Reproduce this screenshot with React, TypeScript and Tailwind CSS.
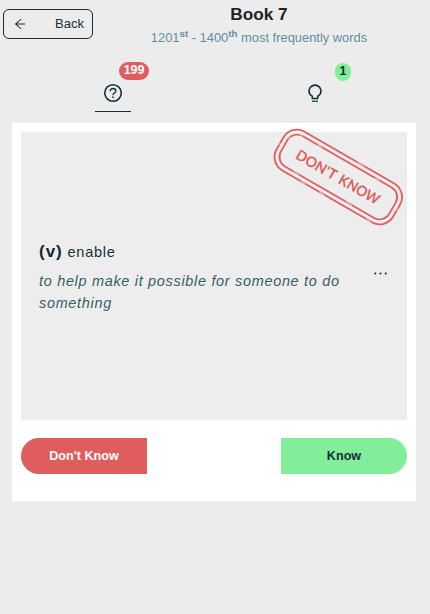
import { AiOutlineArrowLeft, AiOutlineEllipsis } from "react-icons/ai";

function Header() {
  return (
    <header className="flex h-[60px] items-start">
      <button className="mt-[9px] ml-[3px] flex h-[30px] w-[90px] shrink-0 items-center justify-between rounded-[6px] border border-[#14303b] pr-[9px] pl-[9px] text-[13px] text-[#14303b]">
        <AiOutlineArrowLeft size={14} />
        <span className="-mr-px">Back</span>
      </button>
      <div className="ml-[-5px] flex-1 text-center">
        <h1 className="mt-[4px] text-[17.2px] leading-[21px] font-bold text-[#222222]">Book 7</h1>
        <p className="mt-[3px] text-[12.9px] leading-[20px] text-[#648ca0]">
          1201<sup className="text-[9.75px] font-bold">st</sup> - 1400
          <sup className="text-[9.75px] font-bold">th</sup> most frequently words
        </p>
      </div>
    </header>
  );
}

function QuestionIcon() {
  return (
    <svg width="20" height="20" viewBox="0 0 20 20" fill="none" stroke="currentColor" strokeWidth="1.6">
      <circle cx="10" cy="10" r="8.3" />
      <path d="M7.2 8.2C7.2 6.4 8.4 5.5 10 5.5s2.8 1 2.8 2.5c0 2-2.8 2.1-2.8 4.2" strokeWidth="1.4" />
      <path d="M10 13.5v1.6" strokeWidth="1.6" />
    </svg>
  );
}

function BulbIcon() {
  return (
    <svg width="20" height="20" viewBox="0 0 20 20" fill="none" stroke="currentColor" strokeWidth="1.6">
      <path d="M7.3 15.5v-2.2C5.3 12.2 4 10.4 4 8.1a6 6 0 0 1 12 0c0 2.3-1.3 4.1-3.3 5.2v2.2z" strokeLinejoin="round" />
      <path d="M7 18.2h6" strokeWidth="1.2" />
    </svg>
  );
}

function Tabs() {
  return (
    <nav className="grid h-[63px] grid-cols-2 pr-[14px] pl-[12px] text-[#14303b]">
      <div className="flex justify-center">
        <div className="relative flex h-[52px] w-[36px] justify-center border-b border-[#14303b] pt-[23px]">
          <QuestionIcon />
          <span className="absolute top-[2px] left-[24px] flex h-[18px] w-[30px] items-center justify-center rounded-full bg-[#e05d5d] pb-[2px] text-[12.4px] leading-none font-bold text-white">199</span>
        </div>
      </div>
      <div className="flex justify-center">
        <div className="relative flex h-[52px] w-[36px] justify-center pt-[23px]">
          <BulbIcon />
          <span className="absolute top-[3px] left-[38px] flex h-[18px] w-[16px] items-center justify-center rounded-full bg-[#82ee9a] pb-[2px] text-[12.4px] leading-none font-bold text-[#14303b]">1</span>
        </div>
      </div>
    </nav>
  );
}

function Stamp() {
  return (
    <svg className="absolute top-[-12px] left-[247px]" width="140" height="114" viewBox="0 0 140 114" aria-label="Don't know stamp">
      <g transform="translate(70.3 57) rotate(30)" fill="none" stroke="#e05d5d">
        <rect x="-67.3" y="-22.3" width="134.6" height="44.6" rx="15.5" strokeWidth="1.8" />
        <rect x="-62.5" y="-17.5" width="125" height="35" rx="11" strokeWidth="1.8" />
        <g stroke="#ededed" strokeWidth="1" opacity="0.65">
          <path d="M-56 -19l6 3M-34 -18l5 1M9 -23l8 1M32 -17l5 -1M58 -23l5 4M-69 2l4 -3M-64 14l3 3M-42 17l7 1M-9 22l6 1M19 17l7 1M45 22l6 1M66 -3l3 4M-30 22l5 1M-60 -10l-4 2" />
        </g>
        <g fontSize="14.6" fontWeight="700" fontFamily="Lato, sans-serif" fill="#e05d5d" stroke="none">
          <text x="-47.5" y="5.5" textLength="45" lengthAdjust="spacingAndGlyphs">DON'T</text>
          <text x="2" y="5.5" textLength="45" lengthAdjust="spacingAndGlyphs">KNOW</text>
        </g>
        <path d="M-46 -4l2 3M-38 4l3 -2M-27 -4l2 3M20 1l2 2M37 2l3 2" stroke="#ededed" strokeWidth=".6" opacity=".5" />
      </g>
    </svg>
  );
}

export default function App() {
  return (
    <div className="min-h-screen bg-[#ececec] font-['Liberation_Sans',Arial,sans-serif]">
      <Header />
      <Tabs />
      <main className="mr-[14px] ml-[12px] h-[378px] bg-white p-[9px]">
        <section className="relative flex h-[288px] items-center justify-between bg-[#ededed] pr-[17px] pl-[18px]">
          <div className="w-[308px] pt-[1px] tracking-[0.7px]">
            <p className="text-[14.6px] leading-[24px] text-[#14303b]">
              <b className="text-[17px] tracking-[1px] text-[#142630]">(v)</b> enable
            </p>
            <p className="mt-[6px] text-[14.45px] leading-[22px] text-[#355e68] italic">to help make it possible for someone to do something</p>
          </div>
          <AiOutlineEllipsis size={19} className="mt-[-5px] text-[#142630]" />
          <Stamp />
        </section>
        <div className="mt-[18px] flex justify-between font-bold">
          <button className="h-[36px] w-[126px] rounded-l-full bg-[#e05d5d] text-[12.6px] text-white">Don't Know</button>
          <button className="h-[36px] w-[126px] rounded-r-full bg-[#82ee9a] text-[12.6px] text-[#14303b]">Know</button>
        </div>
      </main>
    </div>
  );
}
